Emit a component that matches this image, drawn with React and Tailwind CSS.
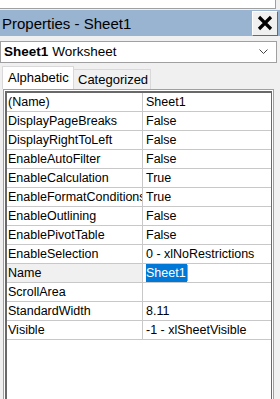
const rows = [
  ["(Name)", "Sheet1"],
  ["DisplayPageBreaks", "False"],
  ["DisplayRightToLeft", "False"],
  ["EnableAutoFilter", "False"],
  ["EnableCalculation", "True"],
  ["EnableFormatConditionsCalculation", "True"],
  ["EnableOutlining", "False"],
  ["EnablePivotTable", "False"],
  ["EnableSelection", "0 - xlNoRestrictions"],
  ["Name", "Sheet1", true],
  ["ScrollArea", ""],
  ["StandardWidth", "8.11"],
  ["Visible", "-1 - xlSheetVisible"],
];

function PropRow({ name, value, selected }) {
  return (
    <div className="flex h-[19px] border-b border-[#c8c8c8]">
      <div
        className={
          "w-[136px] shrink-0 overflow-hidden whitespace-nowrap border-r border-[#c8c8c8] pl-[1px] text-[12.5px] leading-[18px] " +
          (selected ? "bg-[#f0f0f0]" : "")
        }
      >
        {name}
      </div>
      <div className="flex-1 overflow-hidden whitespace-nowrap pl-[3px] text-[12.5px] leading-[18px]">
        {selected ? (
          <span className="inline-flex items-center">
            <span className="bg-[#0078d7] pr-[1px] text-white">{value}</span>
            <span className="inline-block h-[16px] w-[1px] bg-[#ff8728]" />
          </span>
        ) : (
          value
        )}
      </div>
    </div>
  );
}

export default function App() {
  return (
    <div
      className="relative h-[399px] w-[280px] overflow-hidden bg-[#f0f0f0] text-[13px] text-black"
      style={{ fontFamily: '"Liberation Sans", Arial, sans-serif' }}
    >
      <div className="h-[9px] w-[276px] border-r border-b border-[#a0a0a0] bg-white" />

      {/* title bar */}
      <div className="mt-[1px] flex h-[26px] items-center bg-[#99b4d1]">
        <span className="pl-[2px] text-[15px] leading-none">Properties - Sheet1</span>
        <button className="ml-auto mr-[2px] flex h-[25px] w-[26px] items-center justify-center border border-t-white border-l-white border-r-[#696969] border-b-[#696969] bg-[#f0f0f0]">
          <svg width="16" height="16" viewBox="0 0 16 16">
            <path d="M2 2 L14 14 M14 2 L2 14" stroke="#000" strokeWidth="3.2" />
          </svg>
        </button>
      </div>

      {/* object combo */}
      <div className="mt-[5px] flex h-[22px] w-[277px] items-center border border-[#a0a0a0] bg-white pl-[3px] text-[13.5px]">
        <span className="font-bold">Sheet1</span>
        <span className="ml-[4px]">Worksheet</span>
        <svg className="ml-auto mr-[8px]" width="9" height="6" viewBox="0 0 9 6">
          <polyline points="0.5,0.5 4.5,4.5 8.5,0.5" fill="none" stroke="#444" strokeWidth="1" />
        </svg>
      </div>

      {/* tabs */}
      <div className="mt-[3px] flex h-[23px] items-end pl-[2px]">
        <div className="flex h-[23px] w-[72px] items-center border border-b-0 border-[#d9d9d9] bg-white pl-[5px]">
          Alphabetic
        </div>
        <div className="flex h-[20px] w-[77px] items-center border border-l-0 border-b-0 border-[#d9d9d9] bg-[#f0f0f0] pl-[4px]">
          Categorized
        </div>
      </div>

      {/* grid */}
      <div className="ml-[3px] h-[320px] w-[271px] border border-[#a0a0a0] bg-white p-[1px]">
        <div className="h-full border-t-2 border-l-2 border-r border-[#696969] bg-white">
          {rows.map(([n, v, s]) => (
            <PropRow key={n} name={n} value={v} selected={s} />
          ))}
        </div>
      </div>
    </div>
  );
}
